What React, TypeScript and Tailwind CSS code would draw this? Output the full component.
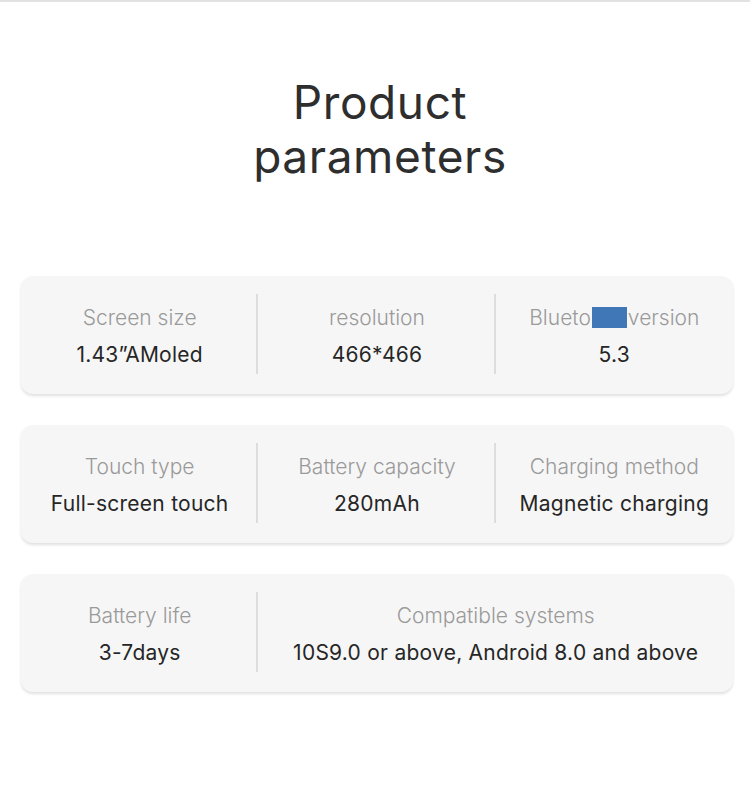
const rows: { label: React.ReactNode; value: string; span?: boolean }[][] = [
  [
    { label: 'Screen size', value: '1.43”AMoled' },
    { label: 'resolution', value: '466*466' },
    {
      label: (
        <span className="inline-flex items-center">
          Blueto
          <span className="inline-block w-[35px] h-[21px] bg-[#3f77b7] mx-[1px]" />
          version
        </span>
      ),
      value: '5.3',
    },
  ],
  [
    { label: 'Touch type', value: 'Full-screen touch' },
    { label: 'Battery capacity', value: '280mAh' },
    { label: 'Charging method', value: 'Magnetic charging' },
  ],
  [
    { label: 'Battery life', value: '3-7days' },
    { label: 'Compatible systems', value: '10S9.0 or above, Android 8.0 and above', span: true },
  ],
];

function Cell({ label, value }: { label: React.ReactNode; value: string }) {
  return (
    <div className="flex flex-col items-center justify-center gap-[9px] pt-[2px]">
      <div className="text-[21px] leading-[28px] font-light text-[#9a9a9a]">{label}</div>
      <div className="text-[21px] leading-[28px] font-normal tracking-[0.25px] text-[#262626]">{value}</div>
    </div>
  );
}

export default function App() {
  return (
    <div
      className="w-[750px] h-[801px] bg-white border-t-2 border-[#e2e2e2] overflow-hidden"
      style={{ fontFamily: 'Inter, "Noto Sans", sans-serif' }}
    >
      <h1 className="pt-[73px] pl-[10px] text-center text-[46px] leading-[54px] font-normal text-[#2e2e2e] tracking-[0.6px]">
        Product
        <br />
        parameters
      </h1>

      <div className="mt-[93px] px-[21px] flex flex-col gap-[31px]">
        {rows.map((row, i) => (
          <div
            key={i}
            className="h-[118px] w-[712px] rounded-[12px] bg-[#f6f6f6] shadow-[0_2px_3px_rgba(0,0,0,0.12)] grid grid-cols-3 items-center"
          >
            {row.map((cell, j) => (
              <div
                key={j}
                className={`${cell.span ? 'col-span-2' : ''} relative h-full flex items-center justify-center`}
              >
                {j > 0 && (
                  <div className="absolute left-[-2px] top-[18px] bottom-[20px] w-[2px] bg-[#dddddd]" />
                )}
                <Cell label={cell.label} value={cell.value} />
              </div>
            ))}
          </div>
        ))}
      </div>
    </div>
  );
}
